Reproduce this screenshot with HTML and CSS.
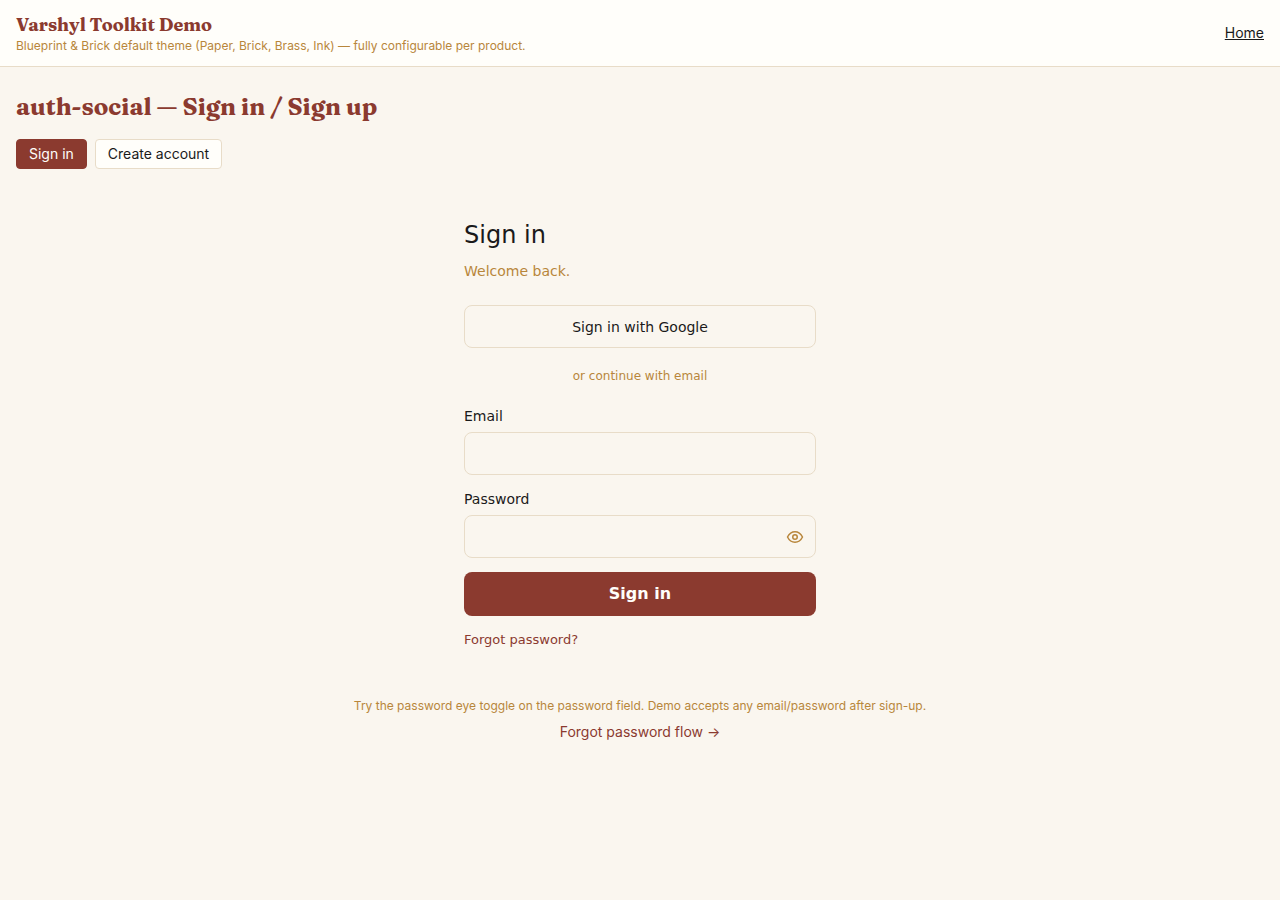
FILE: index.html
```html
<!DOCTYPE html>
<html lang="en">
<head>
    <meta charset="UTF-8">
    <meta name="viewport" content="width=device-width, initial-scale=1.0">
    <title>Varshyl Toolkit Demo</title>
    <link rel="stylesheet" href="styles.css">
</head>
<body>

<header class="site-header">
    <div>
        <p class="brand">Varshyl Toolkit Demo</p>
        <p class="tagline">Blueprint &amp; Brick default theme (Paper, Brick, Brass, Ink) — fully configurable per product.</p>
    </div>
    <nav>
        <a class="home-link" href="#">Home</a>
    </nav>
</header>

<main>
    <h1>auth-social — Sign in / Sign up</h1>
    <div class="tabs">
        <button type="button" class="tab active">Sign in</button>
        <button type="button" class="tab">Create account</button>
    </div>

    <section class="auth">
        <h2>Sign in</h2>
        <p class="welcome">Welcome back.</p>
        <button type="button" class="google">Sign in with Google</button>
        <p class="divider">or continue with email</p>
        <form onsubmit="return false">
            <label for="email">Email</label>
            <input id="email" type="email">
            <label for="password">Password</label>
            <div class="password-field">
                <input id="password" type="password">
                <button type="button" class="eye" aria-label="Show password">
                    <svg width="18" height="18" viewBox="0 0 24 24" fill="none" stroke="currentColor" stroke-width="2" stroke-linecap="round" stroke-linejoin="round">
                        <path d="M2 12s3.5-7 10-7 10 7 10 7-3.5 7-10 7S2 12 2 12z"/>
                        <circle cx="12" cy="12" r="3"/>
                    </svg>
                </button>
            </div>
            <button type="submit" class="submit">Sign in</button>
        </form>
        <a class="forgot" href="#">Forgot password?</a>
    </section>

    <p class="hint">Try the password eye toggle on the password field. Demo accepts any email/password after sign-up.</p>
    <p class="flow"><a href="#">Forgot password flow →</a></p>
</main>

<script>
    document.querySelector('.eye').addEventListener('click', function () {
        const field = document.getElementById('password');
        field.type = field.type === 'password' ? 'text' : 'password';
    });
</script>

</body>
</html>
```
FILE: styles.css
```css
* {
    box-sizing: border-box;
}
body {
    margin: 0;
    font-family: Inter, sans-serif;
    font-size: 14px;
    line-height: 20px;
    background: #faf6ef;
    color: #1a1a1a;
}
h1, h2, p {
    margin: 0;
}
button, input {
    font: inherit;
    color: inherit;
}
button {
    cursor: pointer;
}
.site-header {
    display: flex;
    justify-content: space-between;
    align-items: center;
    padding: 12px 16px;
    background: #fffefa;
    border-bottom: 1px solid #e8dcc8;
}
.brand {
    font-family: Fraunces, "Liberation Serif", serif;
    font-size: 18px;
    font-weight: 700;
    line-height: 26px;
    color: #8b3a2f;
}
.tagline {
    font-size: 12px;
    line-height: 16px;
    color: #b8863b;
}
.home-link {
    color: #1a1a1a;
}
main {
    padding: 24px 16px;
}
h1 {
    font-family: Fraunces, "Liberation Serif", serif;
    font-size: 24px;
    font-weight: 700;
    line-height: 32px;
    color: #8b3a2f;
}
.tabs {
    display: flex;
    gap: 8px;
    margin-top: 16px;
}
.tab {
    height: 30px;
    padding: 0 12px;
    background: #fffefa;
    border: 1px solid #e8dcc8;
    border-radius: 4px;
}
.tab.active {
    background: #8b3a2f;
    border-color: #8b3a2f;
    color: #fffefa;
}
.auth {
    max-width: 400px;
    margin: 24px auto;
    padding: 24px;
    font-family: "DejaVu Sans", sans-serif;
}
h2 {
    font-size: 24px;
    font-weight: 400;
    line-height: 36px;
}
.welcome {
    margin-top: 8px;
    color: #b8863b;
}
.google {
    display: block;
    width: 100%;
    height: 43px;
    margin-top: 24px;
    background: transparent;
    border: 1px solid #e8dcc8;
    border-radius: 8px;
}
.divider {
    margin: 18px 0 20px;
    font-size: 12px;
    text-align: center;
    color: #b8863b;
}
label {
    display: block;
    margin-bottom: 6px;
}
input {
    display: block;
    width: 100%;
    height: 43px;
    margin-bottom: 14px;
    padding: 0 12px;
    background: transparent;
    border: 1px solid #e8dcc8;
    border-radius: 8px;
}
.password-field {
    position: relative;
}
.eye {
    position: absolute;
    top: 0;
    right: 12px;
    display: flex;
    align-items: center;
    height: 43px;
    padding: 0;
    background: none;
    border: none;
    color: #b8863b;
}
.submit {
    display: block;
    width: 100%;
    height: 44px;
    background: #8b3a2f;
    border: none;
    border-radius: 8px;
    font-size: 16px;
    font-weight: 600;
    color: #fffefa;
}
.forgot {
    display: block;
    margin-top: 14px;
    font-size: 13px;
    color: #8b3a2f;
    text-decoration: none;
}
.hint {
    font-size: 12px;
    line-height: 16px;
    text-align: center;
    color: #b8863b;
}
.flow {
    margin-top: 8px;
    text-align: center;
}
.flow a {
    color: #8b3a2f;
    text-decoration: none;
}
```
